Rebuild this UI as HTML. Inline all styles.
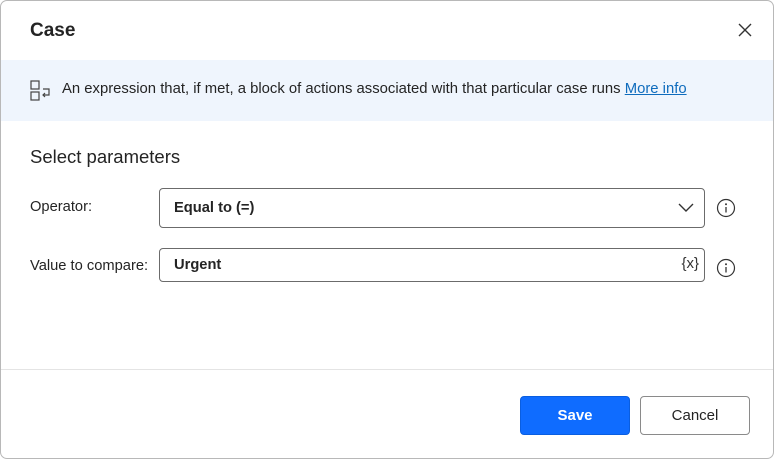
<!DOCTYPE html>
<html><head><meta charset="utf-8"><style>
*{box-sizing:border-box;margin:0;padding:0}
body{width:775px;height:460px;background:#fff;font-family:"Liberation Sans",sans-serif;color:#242424;position:relative;overflow:hidden}
.frame{position:absolute;left:0;top:0;width:774px;height:459px;border-radius:7px;overflow:hidden;background:#fff;box-shadow:inset 0 0 0 1px #b8b8b8}
.title{position:absolute;left:30px;top:20px;font-size:19px;font-weight:bold}
.close{position:absolute;left:737px;top:22px}
.banner{position:absolute;left:1px;top:60px;width:772px;height:61px;background:#eff5fd}
.banner .txt{position:absolute;left:61px;top:21px;font-size:14.85px;color:#242424}
.banner a{color:#0f6cbd;text-decoration:underline}
.banner svg{position:absolute;left:29px;top:20px}
.h2{position:absolute;left:30px;top:146px;font-size:18.5px}
.lbl{position:absolute;left:30px;font-size:14.7px}
.box{position:absolute;left:159px;width:546px;border:1px solid #6b6b6b;border-radius:4px;font-weight:bold;font-size:14.7px;padding-left:14px}
.info{position:absolute;left:716px}
.sep{position:absolute;left:1px;top:369px;width:772px;height:1px;background:#e4e4e4}
.btn{position:absolute;top:396px;width:110px;height:39px;border-radius:4px;font-size:15px;text-align:center;line-height:37px}
</style></head><body><div class="frame">
<div class="title">Case</div>
<svg class="close" width="16" height="16" viewBox="0 0 16 16"><path d="M2 2L14 14M14 2L2 14" stroke="#333" stroke-width="1.4"/></svg>
<div class="banner">
<svg width="22" height="22" viewBox="0 0 22 22" fill="none" stroke="#444" stroke-width="1.2"><rect x="1" y="1" width="8" height="8"/><rect x="1" y="12" width="8" height="8"/><path d="M13 9h6v6h-6M15 13l-2 2 2 2"/></svg>
<div class="txt">An expression that, if met, a block of actions associated with that particular case runs <a>More info</a></div>
</div>
<div class="h2">Select parameters</div>
<div class="lbl" style="top:199px">Operator:</div>
<div class="box" style="top:188px;height:40px;line-height:38px">Equal to (=)
<svg style="position:absolute;right:10px;top:14px" width="16" height="10" viewBox="0 0 16 10"><path d="M1 1l7 7 7-7" fill="none" stroke="#333" stroke-width="1.4"/></svg></div>
<svg class="info" style="top:198px" width="20" height="20" viewBox="0 0 20 20"><circle cx="10" cy="10" r="8.5" fill="none" stroke="#333" stroke-width="1.2"/><circle cx="10" cy="6.3" r="1" fill="#333"/><path d="M10 9v5.5" stroke="#333" stroke-width="1.3"/></svg>
<div class="lbl" style="top:258px">Value to compare:</div>
<div class="box" style="top:248px;height:34px;line-height:32px">Urgent
<span style="position:absolute;right:5px;top:-1px;font-weight:normal;font-size:15px;color:#333">{x}</span></div>
<svg class="info" style="top:258px" width="20" height="20" viewBox="0 0 20 20"><circle cx="10" cy="10" r="8.5" fill="none" stroke="#333" stroke-width="1.2"/><circle cx="10" cy="6.3" r="1" fill="#333"/><path d="M10 9v5.5" stroke="#333" stroke-width="1.3"/></svg>
<div class="sep"></div>
<div class="btn" style="left:520px;background:#0f6cff;color:#fff;font-weight:bold;border:1px solid #0a5ee0">Save</div>
<div class="btn" style="left:640px;background:#fff;border:1px solid #8a8a8a">Cancel</div>
</div></body></html>
